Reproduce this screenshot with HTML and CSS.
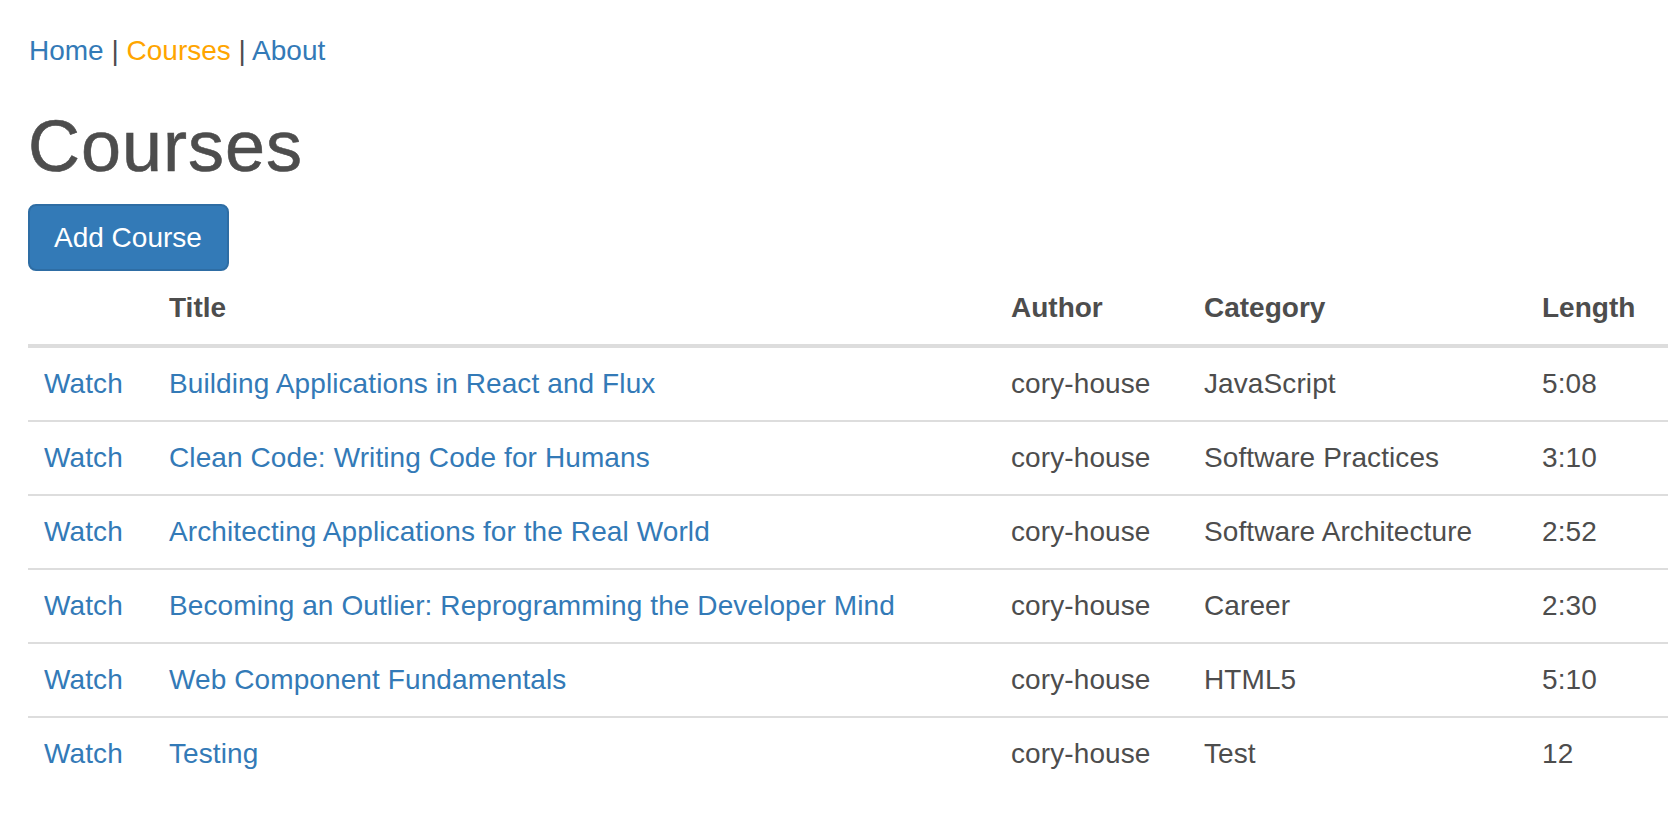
FILE: index.html
```html
<!DOCTYPE html>
<html>
<head>
<meta charset="utf-8">
<title>Courses</title>
<link rel="stylesheet" href="styles.css">
</head>
<body>
<div class="page">
  <nav class="nav">
    <a href="#" class="link">Home</a> | <a href="#" class="link active">Courses</a> | <a href="#" class="link">About</a>
  </nav>
  <h1 class="title">Courses</h1>
  <div class="actions">
    <button class="btn">Add Course</button>
  </div>
  <table class="table">
    <colgroup>
      <col class="c1"><col class="c2"><col class="c3"><col class="c4"><col class="c5">
    </colgroup>
    <thead>
      <tr><th>&nbsp;</th><th>Title</th><th>Author</th><th>Category</th><th>Length</th></tr>
    </thead>
    <tbody>
      <tr><td><a href="#" class="link">Watch</a></td><td><a href="#" class="link">Building Applications in React and Flux</a></td><td>cory-house</td><td>JavaScript</td><td>5:08</td></tr>
      <tr><td><a href="#" class="link">Watch</a></td><td><a href="#" class="link">Clean Code: Writing Code for Humans</a></td><td>cory-house</td><td>Software Practices</td><td>3:10</td></tr>
      <tr><td><a href="#" class="link">Watch</a></td><td><a href="#" class="link">Architecting Applications for the Real World</a></td><td>cory-house</td><td>Software Architecture</td><td>2:52</td></tr>
      <tr><td><a href="#" class="link">Watch</a></td><td><a href="#" class="link">Becoming an Outlier: Reprogramming the Developer Mind</a></td><td>cory-house</td><td>Career</td><td>2:30</td></tr>
      <tr><td><a href="#" class="link">Watch</a></td><td><a href="#" class="link">Web Component Fundamentals</a></td><td>cory-house</td><td>HTML5</td><td>5:10</td></tr>
      <tr><td><a href="#" class="link">Watch</a></td><td><a href="#" class="link">Testing</a></td><td>cory-house</td><td>Test</td><td>12</td></tr>
    </tbody>
  </table>
</div>
</body>
</html>
```

FILE: styles.css
```css
html, body {
  margin: 0;
  padding: 0;
  background: #fff;
}

body {
  font-family: "Liberation Sans", Arial, Helvetica, sans-serif;
  font-size: 28px;
  line-height: 40px;
  color: #4d4d4d;
}

.page {
  padding: 31px 0 0 28px;
  width: 1640px;
}

.nav {
  height: 40px;
  line-height: 40px;
  padding-left: 1px;
}

.link {
  color: #337ab7;
  text-decoration: none;
}

.link.active {
  color: #ffa500;
}

.title {
  margin: 36px 0 18px 0;
  font-size: 72px;
  line-height: 79px;
  font-weight: 500;
  letter-spacing: 1px;
  color: #4d4d4d;
  -webkit-text-stroke: 0.6px #4d4d4d;
}

.actions {
  display: flex;
}

.btn {
  font-family: inherit;
  font-size: 28px;
  line-height: 40px;
  color: #fff;
  background: #337ab7;
  border: 2px solid #2e6da4;
  border-radius: 8px;
  padding: 12px 25px 11px 24px;
  margin: 0;
  cursor: pointer;
}

.table {
  margin-top: 1px;
  width: 1640px;
  border-collapse: collapse;
  border-spacing: 0;
  table-layout: fixed;
}

.c1 { width: 125px; }
.c2 { width: 842px; }
.c3 { width: 193px; }
.c4 { width: 338px; }
.c5 { width: 142px; }

.table th,
.table td {
  padding: 16px;
  text-align: left;
  line-height: 40px;
  white-space: nowrap;
}

.table td {
  letter-spacing: 0.1px;
}

.table th {
  font-weight: bold;
  vertical-align: bottom;
  border-bottom: 4px solid #ddd;
}

.table td {
  vertical-align: top;
  border-top: 2px solid #ddd;
}

.table tbody tr:first-child td {
  border-top: 0;
}
```
